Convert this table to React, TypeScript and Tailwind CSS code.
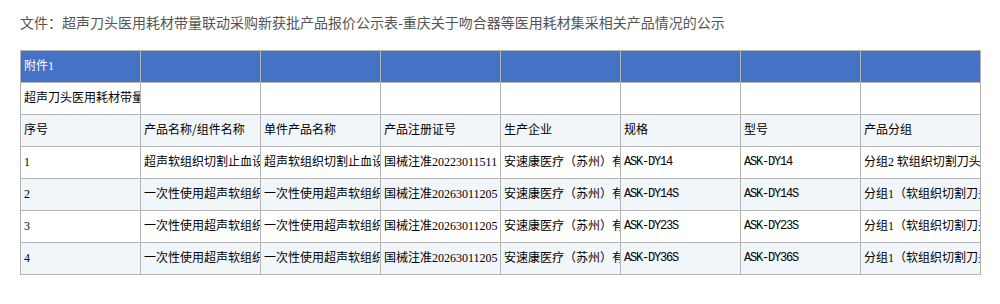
import React from 'react';

const CJK = "font-['Noto_Sans_CJK_SC',sans-serif]";

type Row = { cells: React.ReactNode[]; bg: string };

const code = (s: string) => (
  <span className="font-['Liberation_Mono',monospace] tracking-[-1.2px]">{s}</span>
);
const num = (s: string) => <span className="font-['Liberation_Serif',serif]">{s}</span>;

const ROWS: Row[] = [
  { bg: 'bg-white', cells: ['超声刀头医用耗材带量联动采购新获批产品报价公示表', '', '', '', '', '', '', ''] },
  {
    bg: 'bg-[#f1f6fb]',
    cells: ['序号', '产品名称/组件名称', '单件产品名称', '产品注册证号', '生产企业', '规格', '型号', '产品分组'],
  },
  {
    bg: 'bg-white',
    cells: [
      num('1'),
      '超声软组织切割止血设备刀头',
      '超声软组织切割止血设备刀头',
      <>国械注准{num('20223011511')}</>,
      '安速康医疗（苏州）有限公司',
      code('ASK-DY14'),
      code('ASK-DY14'),
      <>分组{num('2')} 软组织切割刀头（非一次性）</>,
    ],
  },
  {
    bg: 'bg-[#f1f6fb]',
    cells: [
      num('2'),
      '一次性使用超声软组织切割止血刀头',
      '一次性使用超声软组织切割止血刀头',
      <>国械注准{num('20263011205')}</>,
      '安速康医疗（苏州）有限公司',
      code('ASK-DY14S'),
      code('ASK-DY14S'),
      <>分组{num('1')}（软组织切割刀头（一次性））</>,
    ],
  },
  {
    bg: 'bg-white',
    cells: [
      num('3'),
      '一次性使用超声软组织切割止血刀头',
      '一次性使用超声软组织切割止血刀头',
      <>国械注准{num('20263011205')}</>,
      '安速康医疗（苏州）有限公司',
      code('ASK-DY23S'),
      code('ASK-DY23S'),
      <>分组{num('1')}（软组织切割刀头（一次性））</>,
    ],
  },
  {
    bg: 'bg-[#f1f6fb]',
    cells: [
      num('4'),
      '一次性使用超声软组织切割止血刀头',
      '一次性使用超声软组织切割止血刀头',
      <>国械注准{num('20263011205')}</>,
      '安速康医疗（苏州）有限公司',
      code('ASK-DY36S'),
      code('ASK-DY36S'),
      <>分组{num('1')}（软组织切割刀头（一次性））</>,
    ],
  },
];

const cell =
  'border border-[#b4b4b4] h-[32px] px-[3px] pb-[3px] whitespace-nowrap overflow-hidden text-left align-middle';

export default function App() {
  return (
    <div className={`bg-white min-h-[304px] px-5 pt-3 ${CJK}`}>
      <div className="text-[14px] leading-[20px] text-[#555] mb-[18px]">
        文件：超声刀头医用耗材带量联动采购新获批产品报价公示表-重庆关于吻合器等医用耗材集采相关产品情况的公示
      </div>
      <table className="table-fixed border-collapse w-[961px] text-[12px] text-black">
        <colgroup>
          {Array.from({ length: 8 }).map((_, i) => (
            <col key={i} className="w-[120px]" />
          ))}
        </colgroup>
        <tbody>
          <tr className="bg-[#4472c4] text-white">
            <td className={cell}>附件{num('1')}</td>
            {Array.from({ length: 7 }).map((_, i) => (
              <td key={i} className={cell} />
            ))}
          </tr>
          {ROWS.map((r, i) => (
            <tr key={i} className={r.bg}>
              {r.cells.map((c, j) => (
                <td key={j} className={cell}>
                  {c}
                </td>
              ))}
            </tr>
          ))}
        </tbody>
      </table>
    </div>
  );
}
